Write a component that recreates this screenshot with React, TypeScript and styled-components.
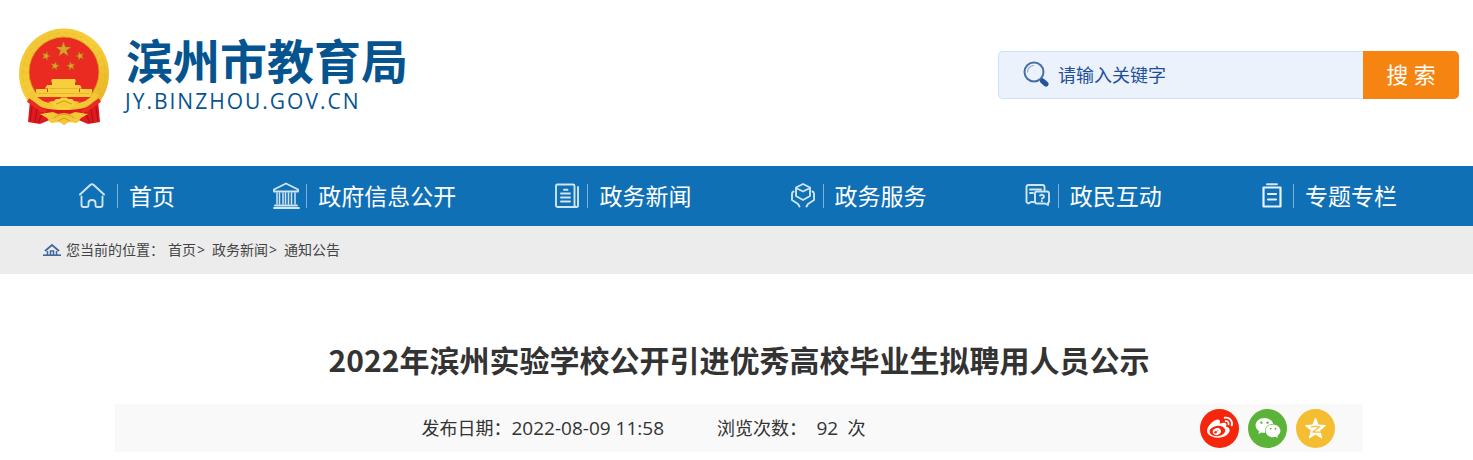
import React from 'react';
import styled, { createGlobalStyle } from 'styled-components';
import { FaWeibo, FaWeixin } from 'react-icons/fa';

const GlobalStyle = createGlobalStyle`
  *, *::before, *::after { box-sizing: border-box; }
  body {
    margin: 0;
    background: #fff;
    color: #333;
    font-family: "Open Sans", "Noto Sans CJK SC", sans-serif;
  }
  a { color: inherit; text-decoration: none; }
  svg { display: block; flex: none; }
`;

const Header = styled.header`
  display: flex;
  justify-content: space-between;
  align-items: flex-start;
  height: 166px;
  padding: 28px 14px 0 18px;
`;

const Brand = styled.a`
  display: flex;
  gap: 15px;
  color: #05548f;
`;

const BrandText = styled.span`
  display: flex;
  flex-direction: column;
  padding-top: 7px;
`;

const BrandName = styled.span`
  padding-left: 1px;
  font: 700 47px/48px "Noto Sans CJK SC", sans-serif;
`;

const BrandDomain = styled.span`
  margin-top: 5px;
  font: 400 21px/26px "Open Sans", sans-serif;
  letter-spacing: 2px;
`;

const SearchForm = styled.form`
  display: flex;
  width: 461px;
  height: 48px;
  margin-top: 23px;
`;

const SearchField = styled.label`
  display: flex;
  flex: 1;
  align-items: center;
  gap: 9px;
  padding: 0 0 2px 24px;
  border: 1px solid #cce1fb;
  border-right: 0;
  border-radius: 5px 0 0 5px;
  background: #ebf2fb;
`;

const SearchInput = styled.input`
  flex: 1;
  min-width: 0;
  height: 100%;
  padding: 0;
  border: 0;
  outline: 0;
  background: transparent;
  color: #1f4f99;
  font: 400 18px/24px "Noto Sans CJK SC", sans-serif;
  &::placeholder { color: #1f4f99; opacity: 1; }
`;

const SearchButton = styled.button`
  width: 96px;
  padding: 0 0 2px;
  border: 0;
  border-radius: 0 5px 5px 0;
  background: #f68410;
  color: #fff;
  font: 400 22px/32px "Open Sans", "Noto Sans CJK SC", sans-serif;
`;

const Nav = styled.nav`
  display: flex;
  justify-content: space-between;
  align-items: center;
  height: 60px;
  padding: 0 76px 0 79px;
  background: #1070b5;
  color: #fff;
`;

const NavLink = styled.a`
  display: flex;
  align-items: center;
  font-size: 23px;
  line-height: 32px;
  white-space: nowrap;
`;

const NavLabel = styled.span`
  display: flex;
  align-items: center;
  &::before {
    content: "";
    width: 1px;
    height: 24px;
    margin-right: 11px;
    background: #7fb2d9;
  }
`;

const Breadcrumb = styled.nav`
  display: flex;
  align-items: center;
  height: 48px;
  padding-left: 43px;
  background: #ececec;
  color: #444;
  font-size: 14px;
  line-height: 24px;
`;

const CrumbLabel = styled.span`
  margin: 0 4px 0 5px;
`;

const Crumb = styled.span`
  display: flex;
  gap: 1px;
  margin-right: 7px;
`;

const Article = styled.main`
  padding: 61px 110px 8px 115px;
`;

const Title = styled.h1`
  margin: 0 0 21px;
  text-align: center;
  font: 700 30px/48px "Noto Sans CJK SC", sans-serif;
`;

const MetaBar = styled.div`
  display: flex;
  align-items: center;
  height: 48px;
  background: #f9f9f9;
`;

const Meta = styled.div`
  display: flex;
  flex: 1;
  justify-content: center;
  gap: 53px;
  font-size: 18px;
  line-height: 24px;
  white-space: pre;
`;

const MetaValue = styled.span`
  font-size: 19px;
`;

const Share = styled.div`
  display: flex;
  gap: 9px;
  padding: 0 28px;
`;

const ShareButton = styled.button<{ $color: string }>`
  display: grid;
  place-items: center;
  width: 39px;
  height: 39px;
  padding: 0;
  border: 0;
  border-radius: 50%;
  background: ${(p) => p.$color};
  color: #fff;
`;

const star = (cx: number, cy: number, r: number, turn = 0) =>
  Array.from({ length: 10 }, (_, i) => {
    const a = -Math.PI / 2 + turn + (i * Math.PI) / 5;
    const d = i % 2 ? r * 0.4 : r;
    return `${(cx + d * Math.cos(a)).toFixed(2)},${(cy + d * Math.sin(a)).toFixed(2)}`;
  }).join(' ');

const Emblem = () => (
  <svg width="92" height="98" viewBox="0 0 92 98" aria-hidden="true">
    <defs>
      <linearGradient id="gold" x1="0" y1="0" x2="1" y2="1">
        <stop offset="0" stopColor="#f1c332" />
        <stop offset=".5" stopColor="#f6cf3a" />
        <stop offset="1" stopColor="#e3ae22" />
      </linearGradient>
    </defs>
    <ellipse cx="46" cy="46" rx="45" ry="45.5" fill="url(#gold)" />
    <g fill="none" stroke="#d9a624" strokeWidth="1" opacity=".35">
      <ellipse cx="46" cy="46" rx="41" ry="41" strokeDasharray="5 3" />
      <ellipse cx="46" cy="46" rx="38" ry="38" strokeDasharray="3 4" />
    </g>
    <circle cx="46" cy="44" r="35" fill="#e92b22" stroke="#d99e1c" strokeWidth=".8" />
    <g fill="#dca32c" stroke="#a96b17" strokeWidth=".5">
      <polygon points={star(45.5, 21.5, 8)} />
      <polygon points={star(28, 28, 4.6, 0.3)} />
      <polygon points={star(62, 28, 4.6, -0.3)} />
      <polygon points={star(37, 38, 4.6, 0.2)} />
      <polygon points={star(53, 38, 4.6, -0.2)} />
    </g>
    <path
      d="M34 51h23l1 3H33zM34 54h23v3H34zM29 57h33l2 3.500H27zM30 60h31v5H30zM18 61h11v3h33v-3h12v3l-2 5H20l-2-5z"
      fill="#f7cf3c"
    />
    <path d="M31 60.500h29M20 65.500h52" stroke="#e3ad2f" strokeWidth=".8" />
    <path d="M17 69h58c-4 5-10 8-17 9H34c-7-1-13-4-17-9z" fill="#e92b22" />
    <path d="M12 72c8 8 18 10 34 10s26-2 34-10l2 22-12 2-12-5H34l-12 5-12-2z" fill="#de1a1d" />
    <path d="M10 72c8 5 12 10 18 12M82 72c-8 5-12 10-18 12" fill="none" stroke="#e92b22" strokeWidth="4" />
    <path d="M13 66c6 8 13 12 24 12M79 66c-6 8-13 12-24 12" fill="none" stroke="#f3c636" strokeWidth="5" />
    <path d="M14 78l-2 15M19 81l-2 14M25 84l-5 11M78 78l2 15M73 81l2 14M67 84l5 11" stroke="#b60e19" strokeWidth="1.200" />
    <path
      d="M30 74l6-1 2-2h4l1-1.500h6l1 1.500h4l2 2 6 1-5 2-3 4-5 2h-6l-6-2-3-4z"
      fill="#f6cf3a"
    />
    <path d="M22 86l13-2 5 2 6-1 6 1 5-2 13 2-7 4-4 5-8-1-5 3-5-3-8 1-4-5z" fill="#f3c636" />
    <path d="M38 76l8-3 8 3M36 90c6-5 14-5 20 0M40 93l6-3 6 3" fill="none" stroke="#d49a1c" />
  </svg>
);

const SearchIcon = () => (
  <svg width="26" height="26" viewBox="0 0 26 26" fill="none" aria-hidden="true">
    <circle cx="11" cy="11" r="9.5" stroke="#476fa8" strokeWidth="2" />
    <path d="M4.500 11a6.500 6.500 0 0 1 6-6.500" stroke="#8aa6cb" strokeWidth="1.200" strokeLinecap="round" />
    <path d="M17.500 17.500l2 2" stroke="#476fa8" strokeWidth="3" />
    <path d="M19.500 20l3.500 3" stroke="#24539a" strokeWidth="5" strokeLinecap="round" />
  </svg>
);

const NavIcon = ({ children }: { children: React.ReactNode }) => (
  <svg
    width="38"
    height="28"
    viewBox="0 0 38 28"
    fill="none"
    stroke="#cfe4f4"
    strokeWidth="1.900"
    strokeLinejoin="round"
    strokeLinecap="round"
    aria-hidden="true"
  >
    {children}
  </svg>
);

const navItems = [
  {
    label: '首页',
    icon: (
      <path d="M1 12.500L11.500 2.800Q13 1.600 14.500 2.800L25 12.500M2.500 14.500V23q0 2 2 2H8q1.500 0 1.500-1.500V21q0-3 3.500-3t3.500 3v2.500q0 1.500 1.500 1.500h3.500q2 0 2-2v-8.500" />
    ),
  },
  {
    label: '政府信息公开',
    icon: (
      <>
        <path d="M6 7.500L18 1.500l12 6v2H6zM7 23.500h22M6 26h25" />
        <path d="M9 11v11M11.500 11v11M15 11v11M17.500 11v11M20.500 11v11M23.500 11v11M27 11v11" strokeWidth="1.500" />
      </>
    ),
  },
  {
    label: '政务新闻',
    icon: (
      <>
        <path d="M27 25H8.500Q7 25 7 23.500V4Q7 2.500 8.500 2.500h15.500Q25.500 2.500 25.500 4V23q0 2 2 2T29 23V5" />
        <path d="M15 7.800h3.500M12 11.500h9M12 15.500h9M12 19.500h9" />
      </>
    ),
  },
  {
    label: '政务服务',
    icon: (
      <>
        <path d="M18 2l7 3.500v8.500l-7 4-7-4V5.500zM12 6.500l6 3 6-3" />
        <path d="M8.500 9.500Q7 10 7 12v6l6 4 1.500 2.500M27.500 9.500Q29 10 29 12v6l-6 4-1.500 2.500" />
      </>
    ),
  },
  {
    label: '政民互动',
    icon: (
      <>
        <path d="M14 20H11l-2.500 1.500L6.500 20V5Q6.500 3 8.500 3h14q2 0 2 2v3M10 7.500h11M10 11h3" />
        <path d="M17 9.500h10q2 0 2 2v8.500l-1 1v2l-3-1.500h-8q-2 0-2-2v-8q0-2 2-2z" />
        <path d="M20 13.500q2-1.500 3.500 0t-1.500 3.200M21.800 19v.2" />
      </>
    ),
  },
  {
    label: '专题专栏',
    icon: (
      <>
        <path d="M12 2.200h10" />
        <path d="M8.500 5.500h17v19h-17zM13 12h8M13 17.500h8" strokeWidth="2.200" stroke="#e6f1f9" />
      </>
    ),
  },
];

const HomeIcon = () => (
  <svg width="18" height="12" viewBox="0 0 18 12" fill="none" stroke="#42679c" aria-hidden="true">
    <path d="M2 7l7-6 7 6" strokeWidth="1.800" />
    <path d="M4.500 7v4M13.500 7v4M7.500 11V7h3v4" strokeWidth="1.500" />
    <path d="M0 11.200h18" strokeWidth="1.600" />
  </svg>
);

const QzoneIcon = () => (
  <svg width="25" height="25" viewBox="0 0 25 25" aria-hidden="true">
    <path
      d="M12.500 2l2.600 7 7.400.5-5.800 5 2 7.500-6.200-3.900L6.300 22l2-7.500-5.800-5 7.400-.5z"
      fill="#fff"
      stroke="#fff"
      strokeLinejoin="round"
    />
    <path d="M8 10.800q4.500-1 8.500.2l-6.500 4.800q4 .8 9 0" fill="none" stroke="#f5bd32" strokeWidth="1.300" />
  </svg>
);

export default function App() {
  return (
    <>
      <GlobalStyle />
      <Header>
        <Brand href="#">
          <Emblem />
          <BrandText>
            <BrandName>滨州市教育局</BrandName>
            <BrandDomain>JY.BINZHOU.GOV.CN</BrandDomain>
          </BrandText>
        </Brand>
        <SearchForm onSubmit={(e) => e.preventDefault()}>
          <SearchField>
            <SearchIcon />
            <SearchInput type="text" placeholder="请输入关键字" aria-label="请输入关键字" />
          </SearchField>
          <SearchButton type="submit">搜 索</SearchButton>
        </SearchForm>
      </Header>
      <Nav>
        {navItems.map((item) => (
          <NavLink href="#" key={item.label}>
            <NavIcon>{item.icon}</NavIcon>
            <NavLabel>{item.label}</NavLabel>
          </NavLink>
        ))}
      </Nav>
      <Breadcrumb>
        <HomeIcon />
        <CrumbLabel>您当前的位置：</CrumbLabel>
        <Crumb><a href="#">首页</a>&gt;</Crumb>
        <Crumb><a href="#">政务新闻</a>&gt;</Crumb>
        <Crumb><a href="#">通知公告</a></Crumb>
      </Breadcrumb>
      <Article>
        <Title>2022年滨州实验学校公开引进优秀高校毕业生拟聘用人员公示</Title>
        <MetaBar>
          <Meta>
            <span>发布日期：<MetaValue>2022-08-09 11:58</MetaValue></span>
            <span>浏览次数：&nbsp; <MetaValue>92</MetaValue>&nbsp; 次</span>
          </Meta>
          <Share>
            <ShareButton type="button" $color="#f5260c" aria-label="微博"><FaWeibo size={26} /></ShareButton>
            <ShareButton type="button" $color="#5bb437" aria-label="微信"><FaWeixin size={26} /></ShareButton>
            <ShareButton type="button" $color="#f5bd32" aria-label="QQ空间"><QzoneIcon /></ShareButton>
          </Share>
        </MetaBar>
      </Article>
    </>
  );
}
